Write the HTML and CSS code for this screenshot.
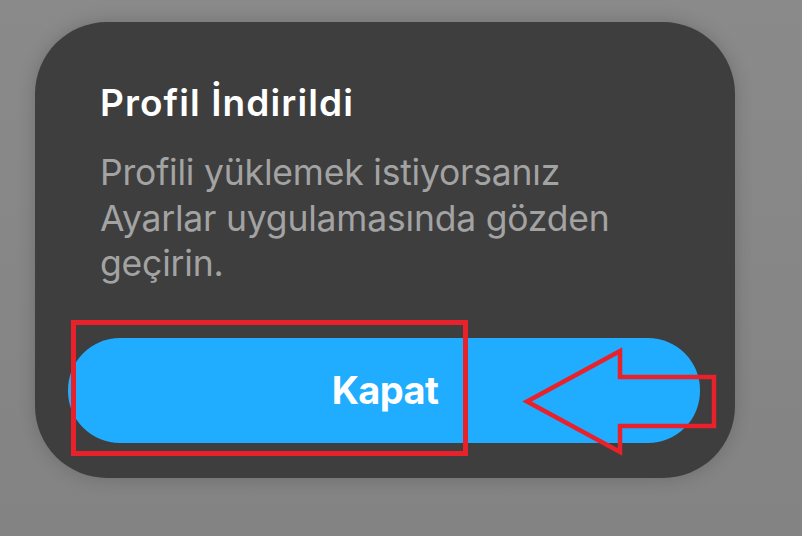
FILE: index.html
```html
<!DOCTYPE html>
<html lang="tr">
<head>
<meta charset="utf-8">
<link rel="stylesheet" href="styles.css">
</head>
<body>
<div class="screen">
  <div class="card">
    <div class="texts">
      <h1 class="title">Profil İndirildi</h1>
      <p class="message">Profili yüklemek istiyorsanız<br>Ayarlar uygulamasında gözden<br>geçirin.</p>
    </div>
    <div class="btn">Kapat</div>
  </div>
  <svg class="marks" width="802" height="536" viewBox="0 0 802 536">
    <rect x="73.5" y="322.5" width="392" height="131" fill="none" stroke="#e8212b" stroke-width="5"/>
    <polygon points="527,401.5 620,351 620,377 714,377 714,426 620,426 620,452" fill="none" stroke="#e8212b" stroke-width="4.5" stroke-linejoin="miter"/>
  </svg>
</div>
</body>
</html>
```

FILE: styles.css
```css
* { box-sizing: border-box; }
html, body { margin: 0; padding: 0; }
body {
  width: 802px;
  height: 536px;
  overflow: hidden;
  background: #878787;
  font-family: Inter, Roboto, sans-serif;
}
.screen {
  position: relative;
  width: 802px;
  height: 536px;
  padding: 22px 0 0 35px;
  background: linear-gradient(180deg, #8a8a8a 0%, #838383 100%);
}
.card {
  width: 700px;
  height: 456px;
  background: #3e3e3e;
  border-radius: 72px;
  box-shadow: 0 0 18px rgba(0,0,0,0.18);
  padding: 59px 35px 0 33px;
  display: flex;
  flex-direction: column;
}
.texts {
  padding-left: 32px;
}
.title {
  margin: 0;
  color: #ffffff;
  font-size: 37px;
  font-weight: 600;
  line-height: 44px;
  letter-spacing: 1.1px;
  white-space: nowrap;
}
.message {
  margin: 25px 0 0 0;
  color: #a3a3a3;
  font-size: 35.5px;
  font-weight: 400;
  line-height: 45.5px;
  letter-spacing: -0.2px;
  white-space: nowrap;
}
.btn {
  margin-top: 51px;
  height: 105px;
  border-radius: 52px;
  background: #20acff;
  color: #ffffff;
  font-size: 38px;
  font-weight: 700;
  letter-spacing: -0.6px;
  display: flex;
  align-items: center;
  justify-content: center;
  padding-left: 2px;
}
.marks {
  position: absolute;
  left: 0;
  top: 0;
  pointer-events: none;
}
```
